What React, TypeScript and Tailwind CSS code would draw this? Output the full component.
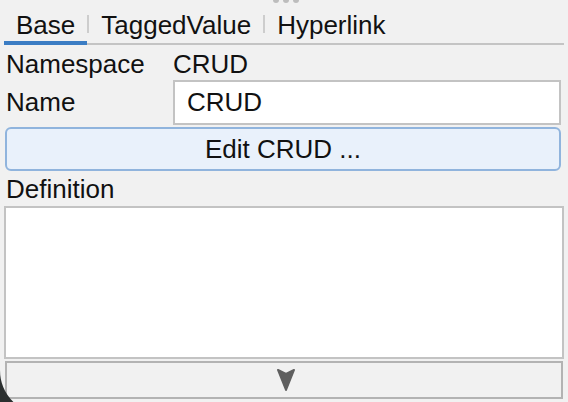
import React from 'react';

const font = { fontFamily: '"Liberation Sans", Arial, sans-serif' };

function Tab({ label, active }: { label: string; active?: boolean }) {
  return (
    <div
      className={`-mb-[2px] px-[12px] pb-[2px] border-b-4 h-[34px] leading-[28px] ${
        active ? 'border-[#3b7dc4]' : 'border-transparent'
      }`}
    >
      {label}
    </div>
  );
}

function Sep() {
  return <div className="w-[2px] h-[18px] bg-[#cdcdcd] mb-[10px] shrink-0" />;
}

export default function App() {
  return (
    <div
      className="relative w-[568px] h-[402px] overflow-hidden bg-[#f1f1f1] text-[26px] text-[#111]"
      style={font}
    >
      {/* drag handle dots */}
      <div className="absolute top-[-3px] left-[273px] flex gap-[4px]">
        <span className="w-[6px] h-[6px] rounded-full bg-[#bdbdbd]" />
        <span className="w-[6px] h-[6px] rounded-full bg-[#bdbdbd]" />
        <span className="w-[6px] h-[6px] rounded-full bg-[#bdbdbd]" />
      </div>

      <div className="px-[4px]">
        {/* Tabs */}
        <div className="flex items-end h-[45px] border-b-2 border-[#c4c4c4]">
          <Tab label="Base" active />
          <Sep />
          <Tab label="TaggedValue" />
          <Sep />
          <Tab label="Hyperlink" />
        </div>

        {/* Namespace */}
        <div className="flex mt-[5px] h-[28px] leading-[28px]">
          <div className="w-[169px] pl-[2px]">Namespace</div>
          <div>CRUD</div>
        </div>

        {/* Name */}
        <div className="flex items-center mt-[2px] h-[45px]">
          <div className="w-[169px] pl-[2px]">Name</div>
          <div className="w-[388px] h-[45px] border-2 border-[#c3c3c3] bg-white pl-[12px] flex items-center">
            CRUD
          </div>
        </div>

        {/* Edit button */}
        <div className="ml-[1px] mt-[2px] w-[556px] h-[44px] rounded-[6px] border-2 border-[#90b4dd] bg-[#e9f1fb] flex items-center justify-center">
          Edit CRUD ...
        </div>

        {/* Definition */}
        <div className="mt-[4px] h-[28px] leading-[28px] pl-[2px]">Definition</div>
        <div className="mt-[3px] h-[153px] border-2 border-[#c3c3c3] bg-white" />

        {/* Expand bar */}
        <div className="ml-[1px] mt-[2px] w-[558px] h-[38px] border-2 border-[#b3b3b3] bg-[#f1f1f1] flex items-center justify-center">
          <svg width="18" height="22" viewBox="0 0 18 22" className="ml-[4px]">
            <path d="M1 1 L9 5 L17 1 L9 21 Z" fill="#5f5f5f" stroke="#5f5f5f" strokeWidth="2" strokeLinejoin="round" />
          </svg>
        </div>
      </div>

      {/* window corner */}
      <svg className="absolute left-0 bottom-0" width="50" height="40" viewBox="0 0 50 40">
        <path d="M0 8 A45 45 0 0 0 13.4 40 L0 40 Z" fill="#2b2f2f" />
      </svg>
    </div>
  );
}
